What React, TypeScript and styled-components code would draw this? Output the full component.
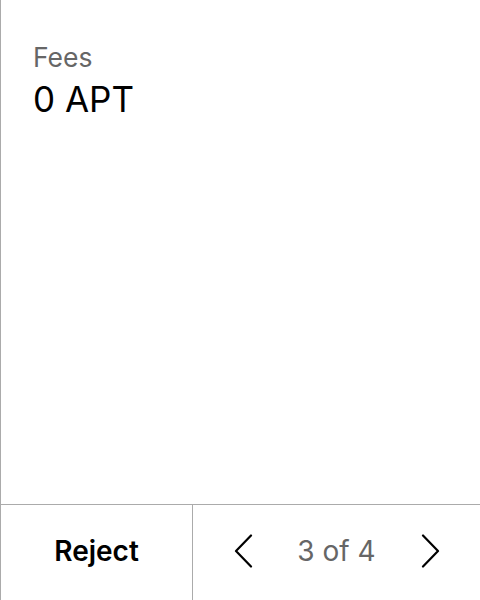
import React from "react";
import styled, { createGlobalStyle } from "styled-components";

const Global = createGlobalStyle`
  html, body { margin: 0; padding: 0; background: #fff; }
  body { font-family: Inter, "Noto Sans", sans-serif; }
  * { box-sizing: border-box; }
`;

const Frame = styled.div`
  width: 480px;
  height: 600px;
  display: flex;
  flex-direction: column;
  border-left: 1px solid #ababab;
`;

const Content = styled.div`
  flex: 1;
  padding: 41px 32px 0 32px;
  display: flex;
  flex-direction: column;
`;

const Label = styled.div`
  font-size: 26.5px;
  line-height: 32px;
  color: #666;
`;

const Value = styled.div`
  font-size: 35px;
  line-height: 40px;
  margin-top: 6px;
  color: #000;
`;

const Footer = styled.div`
  height: 96px;
  border-top: 1px solid #ababab;
  display: grid;
  grid-template-columns: 192px 1fr;
  padding-bottom: 4px;
`;

const RejectButton = styled.button`
  border: none;
  border-right: 1px solid #ababab;
  margin-bottom: -4px;
  padding: 0 0 4px 0;
  background: transparent;
  font-family: inherit;
  font-size: 28px;
  font-weight: 600;
  color: #000;
  cursor: pointer;
`;

const Pager = styled.div`
  display: flex;
  align-items: center;
  justify-content: center;
  gap: 43px;
`;

const Arrow = styled.button`
  border: none;
  background: transparent;
  padding: 0;
  width: 20px;
  height: 34px;
  display: flex;
  align-items: center;
  justify-content: center;
`;

const PageText = styled.span`
  font-size: 28px;
  color: #666;
  width: 80px;
  text-align: center;
  white-space: nowrap;
`;

const Chevron = ({ dir }: { dir: "left" | "right" }) => (
  <svg width="20" height="34" viewBox="0 0 20 34" fill="none">
    <path
      d={dir === "left" ? "M17 1.5 L2 17 L17 32.5" : "M3 1.5 L18 17 L3 32.5"}
      stroke="#000"
      strokeWidth="2.2"
      strokeLinecap="round"
      strokeLinejoin="round"
    />
  </svg>
);

export default function App() {
  return (
    <>
      <Global />
      <Frame>
        <Content>
          <Label>Fees</Label>
          <Value>0 APT</Value>
        </Content>
        <Footer>
          <RejectButton>Reject</RejectButton>
          <Pager>
            <Arrow><Chevron dir="left" /></Arrow>
            <PageText>3 of 4</PageText>
            <Arrow><Chevron dir="right" /></Arrow>
          </Pager>
        </Footer>
      </Frame>
    </>
  );
}
